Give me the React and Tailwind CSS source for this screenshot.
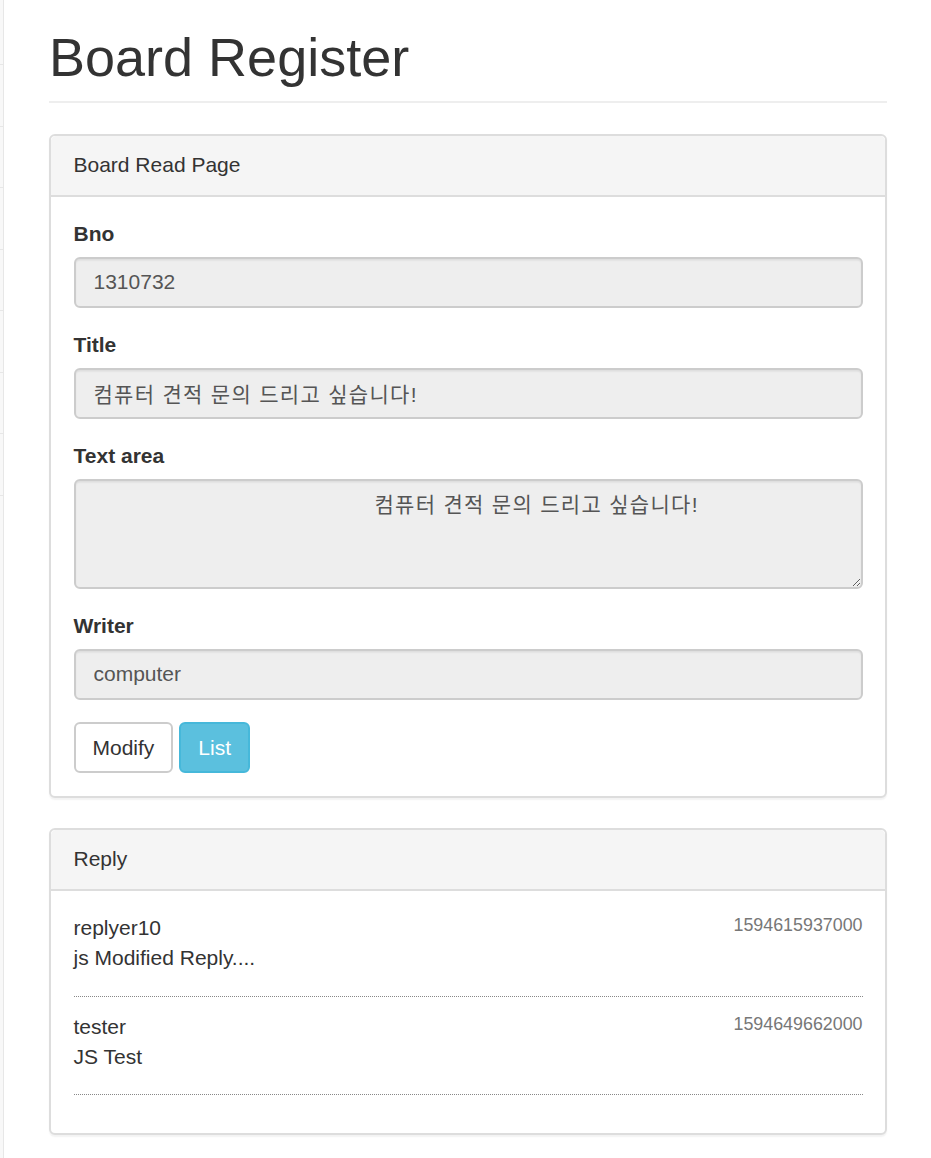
import React from 'react';

const font = "font-['Liberation_Sans','Noto_Sans_CJK_KR',Arial,sans-serif]";

function Field({ label, value, wide }) {
  return (
    <div className="mb-[22.5px]">
      <label className="block font-bold mb-[7.5px] leading-[30px]">{label}</label>
      <input
        readOnly
        value={value}
        className={`block w-full h-[51px] px-[18px] py-[9px] text-[21px] leading-[30px] text-[#555] bg-[#eee] border-2 border-[#ccc] rounded-[6px] shadow-[inset_0_1.5px_1.5px_rgba(0,0,0,0.075)] outline-none ${wide ? 'tracking-[1.3px]' : ''} ${font}`}
      />
    </div>
  );
}

function Panel({ title, children }) {
  return (
    <div className="mb-[30px] bg-white border-2 border-[#ddd] rounded-[6px] shadow-[0_1.5px_1.5px_rgba(0,0,0,0.05)]">
      <div className="px-[22.5px] py-[14.5px] leading-[30px] bg-[#f5f5f5] border-b-2 border-[#ddd] rounded-t-[5px]">
        {title}
      </div>
      <div className="p-[22.5px]">{children}</div>
    </div>
  );
}

const replies = [
  { who: 'replyer10', text: 'js Modified Reply....', date: '1594615937000' },
  { who: 'tester', text: 'JS Test', date: '1594649662000' },
];

export default function App() {
  return (
    <div className={`min-h-screen flex bg-white text-[#333] text-[21px] leading-[30px] ${font}`}>
      <aside className="w-[4px] shrink-0 bg-[#f8f8f8] border-r border-[#e7e7e7]">
        <div className="h-[65px] border-b border-[#e7e7e7]" />
        {[0, 1, 2, 3, 4, 5, 6].map(i => (
          <div key={i} className="h-[61.5px] border-b border-[#e7e7e7]" />
        ))}
      </aside>

      <main className="flex-1 min-w-0 pl-[45px] pr-[44px]">
        <div className="pt-[28px] pb-[13.5px] mb-[31px] border-b-2 border-[#eee]">
          <h1 className="text-[54px] leading-[59.4px] font-medium">Board Register</h1>
        </div>

        <Panel title="Board Read Page">
          <Field label="Bno" value="1310732" />
          <Field label="Title" value="컴퓨터 견적 문의 드리고 싶습니다!" wide />
          <div className="mb-[22.5px]">
            <label className="block font-bold mb-[7.5px] leading-[30px]">Text area</label>
            <textarea
              readOnly
              rows={3}
              value="컴퓨터 견적 문의 드리고 싶습니다!"
              className={`block w-full h-[110px] px-[18px] py-[9px] indent-[281px] tracking-[1.3px] text-[21px] leading-[30px] text-[#555] bg-[#eee] border-2 border-[#ccc] rounded-[6px] shadow-[inset_0_1.5px_1.5px_rgba(0,0,0,0.075)] outline-none resize-y ${font}`}
            />
          </div>
          <Field label="Writer" value="computer" />
          <div className="flex gap-[6px]">
            <button className="h-[51px] px-[17px] bg-white border-2 border-[#ccc] rounded-[6px] text-[#333]">
              Modify
            </button>
            <button className="h-[51px] px-[17px] bg-[#5bc0de] border-2 border-[#46b8da] rounded-[6px] text-white">
              List
            </button>
          </div>
        </Panel>

        <Panel title="Reply">
          <ul>
            {replies.map(r => (
              <li key={r.date} className="mb-[15px] pb-[7.5px] border-b-[1.5px] border-dotted border-[#888]">
                <div className="flex justify-between items-start">
                  <span>{r.who}</span>
                  <small className="text-[17.85px] leading-[25.5px] text-[#777]">{r.date}</small>
                </div>
                <p className="mb-[15px]">{r.text}</p>
              </li>
            ))}
          </ul>
        </Panel>
      </main>
    </div>
  );
}
